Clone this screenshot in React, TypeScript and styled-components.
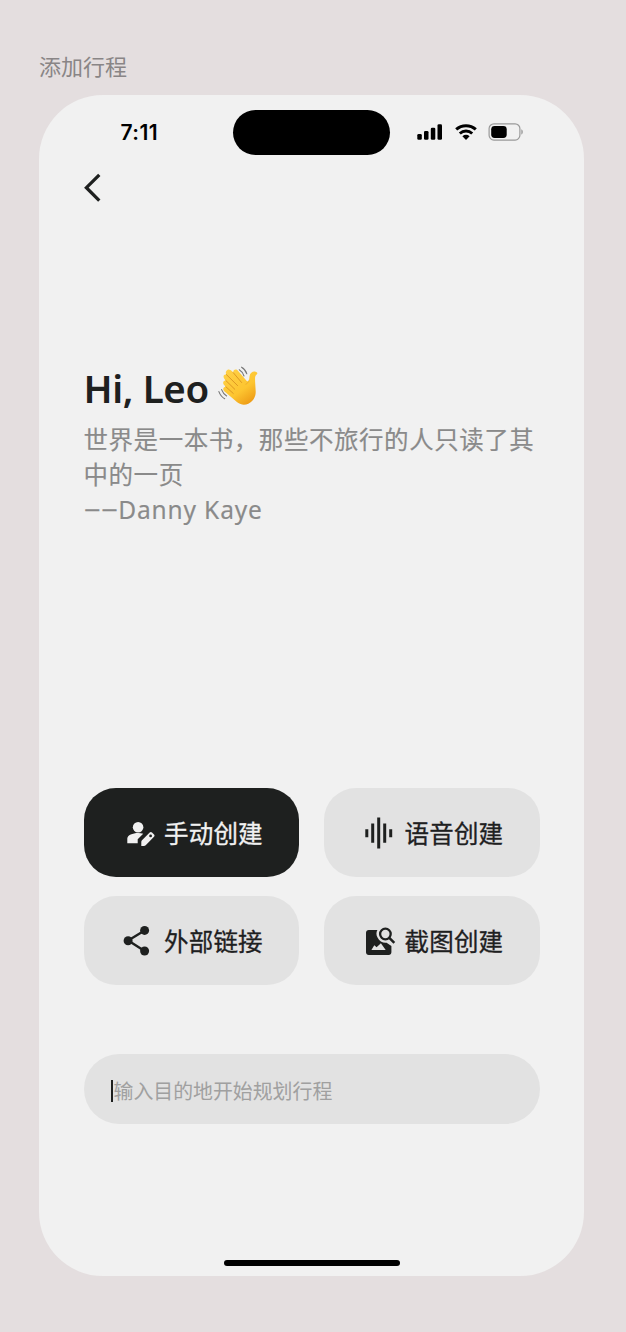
import React from 'react';
import styled, { createGlobalStyle } from 'styled-components';

const GlobalStyle = createGlobalStyle`
  * { box-sizing: border-box; }
  body {
    margin: 0;
    background: #e4dedf;
    font-family: "Noto Sans", "Noto Sans CJK SC", sans-serif;
  }
  svg { display: block; flex: none; }
`;

const Page = styled.main`
  width: 626px;
  height: 1332px;
  padding: 49px 42px 0 39px;
  background: #e4dedf;
  overflow: hidden;
`;

const FrameLabel = styled.div`
  height: 46.4px;
  font: 400 22px/32px "Noto Sans CJK SC", sans-serif;
  color: #898586;
`;

const Phone = styled.section`
  display: flex;
  flex-direction: column;
  width: 545px;
  height: 1181px;
  padding: 15px 44.5px 10px;
  border-radius: 64px;
  background: #f1f1f1;
`;

const StatusBar = styled.header`
  display: flex;
  align-items: center;
  height: 44.5px;
`;

const Clock = styled.time`
  width: 149.5px;
  padding-left: 37px;
  font: 600 21px/24px Inter, sans-serif;
  letter-spacing: 0.4px;
  color: #000;
`;

const Island = styled.div`
  width: 157px;
  height: 44.5px;
  border-radius: 23px;
  background: #000;
`;

const Indicators = styled.div`
  display: flex;
  align-items: center;
  padding-left: 27px;
  margin-top: -1px;
`;

const BackButton = styled.button`
  width: 20px;
  height: 30px;
  margin-top: 18.3px;
  padding: 0;
  border: 0;
  background: none;
`;

const Greeting = styled.h1`
  display: flex;
  align-items: center;
  height: 52px;
  margin: 159.2px 0 0;
  font: 600 38.5px/52px "Noto Sans", sans-serif;
  letter-spacing: -0.4px;
  color: #1e201f;
  white-space: pre;

  svg { margin: -3px 0 0 -0.5px; }
`;

const Quote = styled.p`
  margin: 6.5px -10px 0 0;
  font: 400 24.5px/35.2px "Noto Sans CJK SC", sans-serif;
  letter-spacing: 0.55px;
  color: #8a8a8a;
  -webkit-text-stroke: 0.15px #8a8a8a;
  white-space: nowrap;
`;

const QuoteLine = styled.span`
  display: block;
  height: 35.2px;
`;

const Attribution = styled(QuoteLine)`
  padding-top: 1px;
  font-family: "Noto Sans", sans-serif;
  letter-spacing: 0.85px;
`;

const Dashes = styled.span`
  font-size: 30px;
  line-height: 0;
  letter-spacing: 0.2px;
  vertical-align: -2px;
  -webkit-text-stroke: 0;
`;

const Actions = styled.div`
  display: grid;
  grid-template-columns: 215.5px 215.5px;
  grid-auto-rows: 88.5px;
  gap: 19.5px 25px;
  margin-top: 262px;
`;

const ActionButton = styled.button<{ $primary?: boolean }>`
  display: flex;
  align-items: center;
  padding: 0 0 0 36px;
  border: 0;
  border-radius: 32px;
  background: ${p => (p.$primary ? '#1e201f' : '#e2e2e2')};
  color: ${p => (p.$primary ? '#f1f1f1' : '#1e201f')};
  font: 400 24.5px/36px "Noto Sans CJK SC", sans-serif;
  letter-spacing: 0.2px;
  -webkit-text-stroke: 0.3px currentColor;
  white-space: nowrap;

  svg { margin-right: 8.5px; }
`;

const SearchField = styled.div`
  display: flex;
  align-items: center;
  height: 69.5px;
  margin-top: 69.5px;
  padding: 4px 0 0 27.5px;
  border-radius: 35px;
  background: #e2e2e2;
  color: #a0a0a0;
  font: 400 19.9px/30px "Noto Sans CJK SC", sans-serif;
`;

const Caret = styled.i`
  width: 2px;
  height: 22px;
  margin-right: 0.5px;
  background: #1e201f;
`;

const HomeIndicator = styled.div`
  align-self: center;
  width: 176px;
  height: 6.5px;
  margin-top: auto;
  border-radius: 4px;
  background: #000;
`;

const SignalIcon = () => (
  <svg width="26" height="16" viewBox="0 0 26 16">
    <rect x="0.3" y="10" width="4.5" height="5.8" rx="1.3" />
    <rect x="7" y="7" width="4.5" height="8.8" rx="1.3" />
    <rect x="13.8" y="3.8" width="4.5" height="12" rx="1.3" />
    <rect x="20.5" y="0.2" width="4.5" height="15.6" rx="1.3" />
  </svg>
);

const Wifi = styled.svg`
  margin-left: 12px;
`;

const WifiIcon = () => (
  <Wifi width="22" height="16" viewBox="0 0 22 16">
    <g fill="none" stroke="#000" strokeWidth="3">
      <path d="M1.2 5.4C6.8.4 15.2.4 20.8 5.4" />
      <path d="M4.8 9.5c3.6-3.2 8.8-3.2 12.4 0" />
    </g>
    <path d="M7.4 12.2c2.1-1.8 5.1-1.8 7.2 0L11 15.9Z" />
  </Wifi>
);

const Battery = styled.svg`
  margin-left: 11px;
`;

const BatteryIcon = () => (
  <Battery width="36" height="18" viewBox="0 0 36 18">
    <rect x="1.1" y="0.8" width="30.8" height="16.3" rx="4.8" fill="none" stroke="#999" strokeWidth="1.2" />
    <rect x="3.2" y="2.9" width="15.5" height="12.1" rx="3.4" />
    <path d="M33.3 6.3c2 .7 2 4.6 0 5.3Z" fill="#999" />
  </Battery>
);

const WaveIcon = () => (
  <svg width="42" height="42" viewBox="0 0 42 42">
    <defs>
      <linearGradient id="skin" x1="0" y1="0" x2="0.7" y2="1">
        <stop offset="0" stopColor="#ffd24a" />
        <stop offset="0.65" stopColor="#fdc530" />
        <stop offset="1" stopColor="#ee9d17" />
      </linearGradient>
    </defs>
    <path
      d="M8.2 5.3C9.5 2.5 12.3 3.2 14 5.2l1.3 1.4c-.6-2.8 2.7-4.3 4.9-1.6l8.3 9.8c1.3 1.1 2.4.5 2.6-1.1l.5-3.7c.6-4.4 5.1-5.8 7.4-3.5.8.8.2 1.5-.6 2.2-1.7 1.5-1.3 3.6-1.3 6.8l.6 10c.3 9.8-10.2 17.2-18.5 10.8L6.6 25.5c-2.6-2.4-.9-5.1 1.2-4.8l-1-1c-3.1-2.8-1.2-5.6 1-5.2l-.2-.2C4.1 11 5.5 7.8 8.4 8.6 7.7 7.4 7.5 6.2 8.2 5.3Z"
      fill="url(#skin)"
    />
    <g fill="none" stroke="#dd9823" strokeWidth="1" strokeLinecap="round">
      <path d="m15.3 6.7 8.3 9.8M8.4 8.6l11.2 11M7.8 14.5l9 8.8M7.8 20.7l7.5 6.8" />
      <path d="M31 14.2c-.3 2.3-1.7 3.3-3.2 4" opacity=".5" />
    </g>
    <g fill="none" stroke="#777" strokeWidth="1.1" strokeLinecap="round">
      <path d="M21.3 3.8q3 1.7 4.7 6.2M23.6 1.2q4 2.4 5.2 6.6M3.6 23.6q1.8 4.6 5 6.4M.9 25.6q1.8 5 5.8 7.1" />
    </g>
  </svg>
);

const ManualIcon = () => (
  <svg width="36" height="36" viewBox="0 0 36 36" fill="#f1f1f1">
    <circle cx="18.1" cy="12.3" r="5.3" />
    <path d="M7.3 28.2v-4.6c0-3.5 5.4-5.7 10.8-5.7 2 0 3.6.3 5.1.8l-5.5 5.6v3.9Z" />
    <path d="M22 25.2 29.7 17.5c.7-.7 1.6-.7 2.3 0l2 2c.7.7.7 1.6 0 2.3l-8.3 8.4c-.5.5-1.1.8-1.8.8h-2.6v-3.4c0-.9.1-1.8.7-2.4Z" />
    <circle cx="30.6" cy="20.9" r="1.4" fill="#1e201f" />
  </svg>
);

const VoiceIcon = () => (
  <svg width="36" height="36" viewBox="0 0 36 36" fill="none" stroke="#1e201f" strokeWidth="3">
    <path d="M6.8 14.3v8M12.7 8.6v19.2M18.7 2.6v31M24.7 8.6v19.2M30.7 14.3v8" />
  </svg>
);

const ShareIcon = () => (
  <svg width="36" height="36" viewBox="0 0 36 36" fill="#1e201f">
    <path d="M24.6 7.5 8.2 17.6l16.4 10.4" fill="none" stroke="#1e201f" strokeWidth="2.4" />
    <circle cx="24.6" cy="7.4" r="4.5" />
    <circle cx="8.1" cy="17.7" r="4.5" />
    <circle cx="24.6" cy="28" r="4.5" />
  </svg>
);

const ImageIcon = () => (
  <svg width="36" height="36" viewBox="0 0 36 36">
    <path
      fill="#1e201f"
      fillRule="evenodd"
      d="M8.8 7h8.6c-1.3 2-1.3 5.1 0 7.2 2 4.2 5.4 6 9.2 5.6l4.8 3.1v6.4c0 1.6-1.1 2.8-2.8 2.8H8.8c-1.7 0-2.8-1.2-2.8-2.8V9.8C6 8.1 7.1 7 8.8 7Zm2.6 20h14.3l-4.8-6.7-4.3 4-2.3-2.1Z"
    />
    <circle cx="25.4" cy="11" r="5.3" fill="none" stroke="#1e201f" strokeWidth="2.3" />
    <path d="m29.3 14.9 5 5" stroke="#1e201f" strokeWidth="2.5" />
  </svg>
);

export default function App() {
  return (
    <>
      <GlobalStyle />
      <Page>
        <FrameLabel>添加行程</FrameLabel>
        <Phone>
          <StatusBar>
            <Clock>7:11</Clock>
            <Island />
            <Indicators>
              <SignalIcon />
              <WifiIcon />
              <BatteryIcon />
            </Indicators>
          </StatusBar>
          <BackButton aria-label="返回">
            <svg width="20" height="30" viewBox="0 0 20 30" fill="none" stroke="#1e201f" strokeWidth="3.3">
              <path d="M15.3 1.8 2.4 14.7l12.9 13" />
            </svg>
          </BackButton>
          <Greeting>Hi, Leo <WaveIcon /></Greeting>
          <Quote>
            <QuoteLine>世界是一本书，那些不旅行的人只读了其</QuoteLine>
            <QuoteLine>中的一页</QuoteLine>
            <Attribution><Dashes>−−</Dashes>Danny Kaye</Attribution>
          </Quote>
          <Actions>
            <ActionButton $primary><ManualIcon />手动创建</ActionButton>
            <ActionButton><VoiceIcon />语音创建</ActionButton>
            <ActionButton><ShareIcon />外部链接</ActionButton>
            <ActionButton><ImageIcon />截图创建</ActionButton>
          </Actions>
          <SearchField><Caret />输入目的地开始规划行程</SearchField>
          <HomeIndicator />
        </Phone>
      </Page>
    </>
  );
}
